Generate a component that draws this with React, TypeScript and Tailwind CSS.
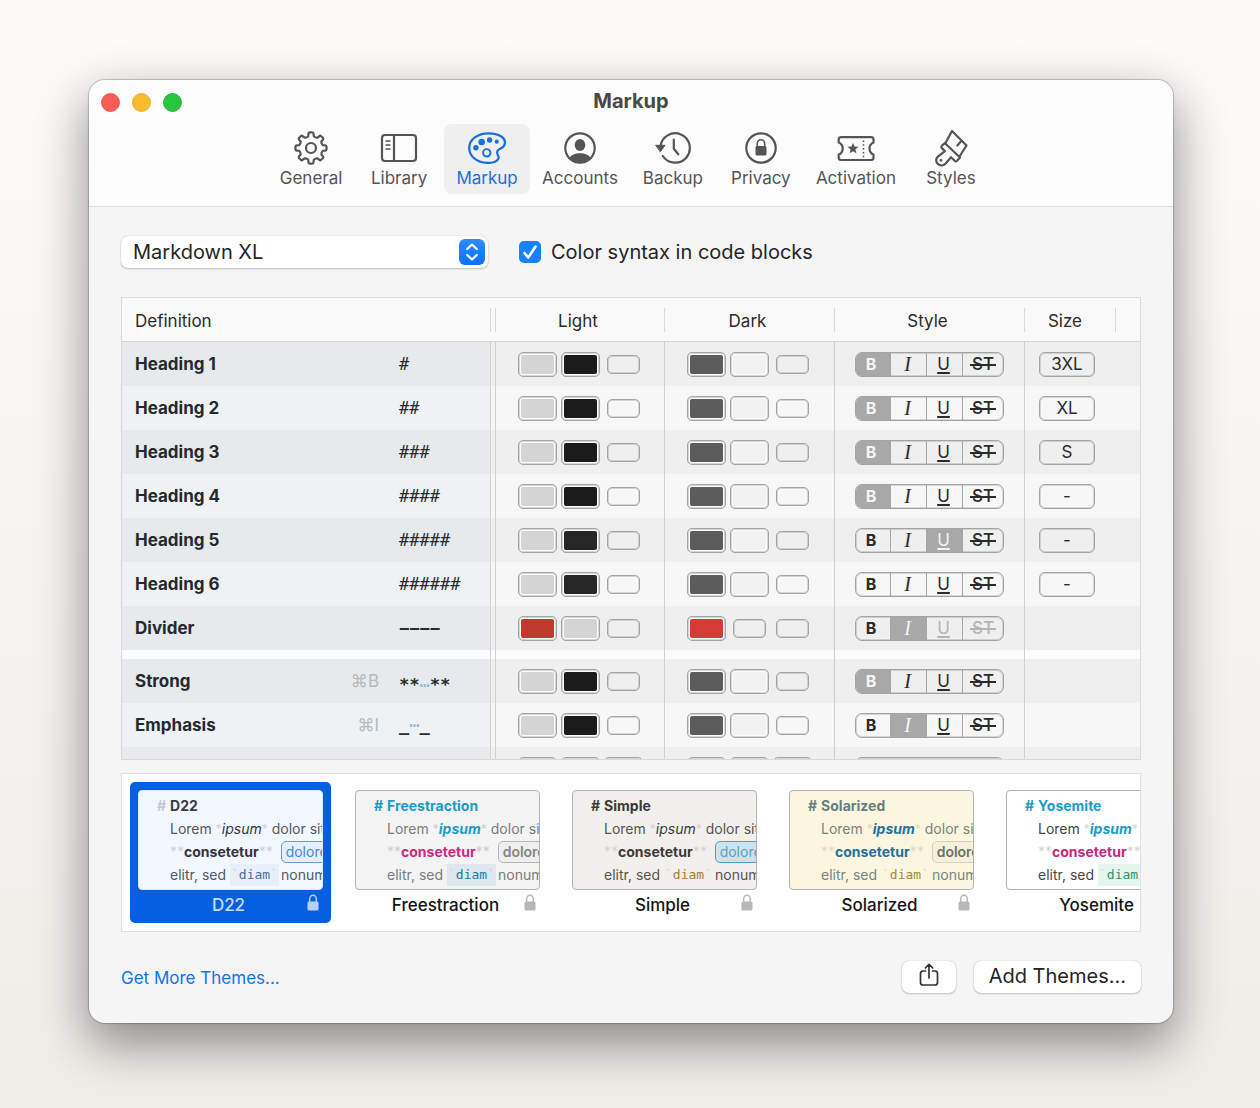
import React from "react";

type Weight = "B" | "I" | "U" | "S";

interface Row {
  name: string;
  mark: React.ReactNode;
  shortcut?: string;
  light: (string | null)[];
  dark: (string | null)[];
  on?: Weight;
  off?: Weight[];
  size?: string;
  groupStart?: boolean;
  shaded: boolean;
}

const LIGHT = ["bg-[#d4d4d4]", "bg-[#1b1b1b]", null];
const LIGHT_SOFT = ["bg-[#d4d4d4]", "bg-[#262626]", null];
const DARK = ["bg-[#5c5c5c]", "bg-[#f2f2f2]", null];

const Dots = ({ raised }: { raised?: boolean }) => (
  <span className={raised ? "relative bottom-1 text-[#8fb4de]" : "text-[#8fb4de]"}>…</span>
);

const ROWS: Row[] = [
  { name: "Heading 1", mark: "#", light: LIGHT, dark: DARK, on: "B", size: "3XL", shaded: true },
  { name: "Heading 2", mark: "##", light: LIGHT, dark: DARK, on: "B", size: "XL", shaded: false },
  { name: "Heading 3", mark: "###", light: LIGHT, dark: DARK, on: "B", size: "S", shaded: true },
  { name: "Heading 4", mark: "####", light: LIGHT, dark: DARK, on: "B", size: "-", shaded: false },
  { name: "Heading 5", mark: "#####", light: LIGHT_SOFT, dark: DARK, on: "U", size: "-", shaded: true },
  { name: "Heading 6", mark: "######", light: LIGHT_SOFT, dark: DARK, size: "-", shaded: false },
  {
    name: "Divider",
    mark: <b>−−−−</b>,
    light: ["bg-[#c03a30]", "bg-[#d4d4d4]", null],
    dark: ["bg-[#d63a34]", null, null],
    on: "I",
    off: ["U", "S"],
    shaded: true,
  },
  {
    name: "Strong",
    mark: <><b>∗∗</b><Dots /><b>∗∗</b></>,
    shortcut: "⌘B",
    light: LIGHT,
    dark: DARK,
    on: "B",
    groupStart: true,
    shaded: true,
  },
  {
    name: "Emphasis",
    mark: <><b>_</b><Dots raised /><b>_</b></>,
    shortcut: "⌘I",
    light: LIGHT,
    dark: DARK,
    on: "I",
    shaded: false,
  },
];

/* ---------- toolbar icons ---------- */

function gearPath(teeth: number, outer: number, inner: number) {
  const pt = (r: number, deg: number) => {
    const a = (deg * Math.PI) / 180;
    return `${(18 + r * Math.sin(a)).toFixed(2)} ${(18 - r * Math.cos(a)).toFixed(2)}`;
  };
  let d = "";
  for (let i = 0; i < teeth; i++) {
    const c = (i * 360) / teeth;
    d += `${i === 0 ? "M" : "L"}${pt(inner, c - 13)}`;
    d += `L${pt(outer - 1, c - 10)}Q${pt(outer, c - 9)} ${pt(outer, c - 5)}`;
    d += `L${pt(outer, c + 5)}Q${pt(outer, c + 9)} ${pt(outer - 1, c + 10)}`;
    d += `L${pt(inner, c + 13)}Q${pt(inner - 1.2, c + 22.5)} ${pt(inner, c + 32)}`;
  }
  return d + "Z";
}

const stroke = { fill: "none", stroke: "currentColor", strokeWidth: 2.2, strokeLinecap: "round", strokeLinejoin: "round" } as const;

const GearIcon = () => (
  <svg width="36" height="36" viewBox="0 0 36 36" {...stroke}>
    <path d={gearPath(8, 15.6, 12.2)} />
    <circle cx="18" cy="18" r="5" />
  </svg>
);

const SidebarIcon = () => (
  <svg width="38" height="30" viewBox="0 0 38 30" {...stroke}>
    <rect x="2" y="2" width="34" height="26" rx="3" />
    <path d="M14 2v26" />
    <path d="M6.2 8h3.6M6.2 12h3.6M6.2 16h3.6" strokeWidth="1.7" />
  </svg>
);

const PaletteIcon = () => (
  <svg width="38" height="32" viewBox="0 0 37 31" {...stroke}>
    <path d="M1.200 15.500C1.200 7 9.500 1.200 20 1.200c9.500 0 16 3.800 16 9 0 3.800-2.500 5.300-5.500 6.600-2.200 1-2.600 2.400-1.800 4.600.8 2 1.800 3.200.6 5C27.800 29 24 30 19.500 30 9 30 1.200 24 1.200 15.500Z" />
    <g fill="currentColor" stroke="none">
      <circle cx="7.700" cy="15.300" r="2.600" />
      <circle cx="13.300" cy="9.700" r="3.200" />
      <circle cx="21" cy="7.700" r="2.600" />
      <circle cx="28" cy="9.300" r="2" />
    </g>
    <circle cx="18.300" cy="20.200" r="3.600" strokeWidth="1.900" />
  </svg>
);

const AccountIcon = () => (
  <svg width="34" height="34" viewBox="0 0 34 34" {...stroke}>
    <circle cx="17" cy="17" r="14.700" />
    <ellipse cx="17" cy="14" rx="5.300" ry="6" fill="currentColor" stroke="none" />
    <path d="M6.500 27c1.500-3 5.500-4.700 10.500-4.700s9 1.700 10.500 4.700c-2.600 2.900-6.500 4.500-10.500 4.500S9.100 29.900 6.500 27Z" fill="currentColor" stroke="none" />
  </svg>
);

const BackupIcon = () => (
  <svg width="36" height="34" viewBox="0 0 36 34" {...stroke}>
    <path d="M5.500 15.500a14.700 14.700 0 1 1 2.300 9.500" />
    <path d="M1 14.300h9L5.500 20.500Z" fill="currentColor" strokeWidth="1" />
    <path d="M18.800 8.500v9.300l4.500 5.500" />
  </svg>
);

const PrivacyIcon = () => (
  <svg width="34" height="34" viewBox="0 0 34 34" {...stroke}>
    <circle cx="17" cy="17" r="14.700" />
    <rect x="11.500" y="15" width="11" height="9.500" rx="1.500" fill="currentColor" stroke="none" />
    <path d="M13.300 15.500v-2.800a3.700 4 0 0 1 7.400 0v2.800" strokeWidth="1.600" />
  </svg>
);

const TicketIcon = () => (
  <svg width="40" height="27" viewBox="-1 -1 39 27" {...stroke}>
    <path d="M3.700 1.200H33.500C35 1.200 36 2.200 36 3.700V6.500C33.500 7.500 32 9.500 32 12.500S33.500 17.500 36 18.500V21.500c0 1.500-1 2.500-2.500 2.500H3.700c-1.500 0-2.500-1-2.500-2.500V18.500C3.700 17.500 5.200 15.500 5.200 12.500S3.700 7.500 1.200 6.500V3.700c0-1.500 1-2.500 2.500-2.500Z" />
    <path d="M15.500 6.800l1.500 3.700 4 .3-3.100 2.600 1 3.900-3.400-2.100-3.400 2.100 1-3.900L10 10.800l4-.3Z" fill="currentColor" stroke="none" />
    <path d="M26 4.500v17" strokeWidth="1.500" strokeDasharray="1.500 2.300" strokeLinecap="butt" />
  </svg>
);

const BrushIcon = () => (
  <svg width="36" height="38" viewBox="-2 -1 36 38" {...stroke}>
    <path d="M10.500 13 17 1l14.500 14.500-7 11" />
    <path d="M26.500 10.800 22.300 15.500" />
    <path d="M10 13.200 25 27.500l-3 3.300c-.8.800-1.500.8-2.300 0L16 27.200l-5.300 6.300c-2 2.200-5.200 2.600-7.600.7-2.500-2.100-2.500-5.600-.2-7.600l7-5.500-3-3c-.8-.8-.8-1.600 0-2.400Z" />
    <circle cx="6" cy="30.300" r="1.400" fill="currentColor" stroke="none" />
  </svg>
);

const TABS = [
  { label: "General", Icon: GearIcon },
  { label: "Library", Icon: SidebarIcon },
  { label: "Markup", Icon: PaletteIcon, active: true },
  { label: "Accounts", Icon: AccountIcon },
  { label: "Backup", Icon: BackupIcon },
  { label: "Privacy", Icon: PrivacyIcon },
  { label: "Activation", Icon: TicketIcon },
  { label: "Styles", Icon: BrushIcon },
];

function Toolbar() {
  return (
    <header className="border-b border-[#dcdcdc] bg-[#fcfcfc] pb-3">
      <div className="grid h-11 grid-cols-[1fr_auto_1fr] items-center px-3">
        <div className="flex gap-3">
          <button aria-label="Close" className="size-[19px] rounded-full border border-[#ee5a54] bg-[#fb5d56]" />
          <button aria-label="Minimize" className="size-[19px] rounded-full border border-[#ecb032] bg-[#fbbb2e]" />
          <button aria-label="Zoom" className="size-[19px] rounded-full border border-[#24bb38] bg-[#29c53e]" />
        </div>
        <h1 className="pb-[2px] text-xl leading-6 font-bold text-[#484848]">Markup</h1>
      </div>
      <nav className="flex justify-center gap-[2px]">
        {TABS.map(({ label, Icon, active }) => (
          <button
            key={label}
            className={
              active
                ? "flex min-w-[86px] flex-col items-center rounded-lg bg-[#efefef] px-[10px] pt-1 pb-[6px] text-[#1a6fe0]"
                : "flex min-w-[86px] flex-col items-center rounded-lg px-[10px] pt-1 pb-[6px] text-[#555555]"
            }
          >
            <span className="flex h-10 items-center justify-center">
              <Icon />
            </span>
            <span className="text-[17px] leading-5">{label}</span>
          </button>
        ))}
      </nav>
    </header>
  );
}

/* ---------- table ---------- */

function Swatch({ color, label }: { color: string | null; label: string }) {
  return (
    <span className="flex w-[39px] justify-center">
      {color ? (
        <button
          aria-label={label}
          className="h-[25px] w-[39px] rounded-[5px] border border-[#a3a3a3] bg-[#fbfbfb] p-[2px] ring-1 ring-[#a3a3a3]/40 ring-inset"
        >
          <span className={`block h-full w-full rounded-[2px] ${color}`} />
        </button>
      ) : (
        <button aria-label={label} className="h-[19px] w-[33px] rounded-[5px] border border-[#a3a3a3] ring-1 ring-[#a3a3a3]/40 ring-inset" />
      )}
    </span>
  );
}

function Swatches({ colors, name }: { colors: (string | null)[]; name: string }) {
  return (
    <div className="flex items-center gap-1 pl-[22px]">
      {colors.map((c, i) => (
        <Swatch key={i} color={c} label={`${name} color ${i + 1}`} />
      ))}
    </div>
  );
}

const STYLE_NAMES: Record<Weight, string> = { B: "Bold", I: "Italic", U: "Underline", S: "Strikethrough" };

function StyleControl({ on, off = [] }: { on?: Weight; off?: Weight[] }) {
  const glyph: Record<Weight, React.ReactNode> = {
    B: <span className="text-base leading-none font-bold">B</span>,
    I: <span className="font-['Liberation_Serif',serif] text-xl leading-none italic">I</span>,
    U: <span className="underline decoration-2 underline-offset-2">U</span>,
    S: (
      <span className="relative px-[2px] font-medium after:absolute after:inset-x-0 after:top-1/2 after:h-[2px] after:bg-current">
        ST
      </span>
    ),
  };
  return (
    <div className="ml-5 flex h-[25px] w-[149px] divide-x divide-[#a6a6a6] overflow-hidden rounded-[7px] border border-[#a3a3a3] ring-1 ring-[#a3a3a3]/40 ring-inset">
      {(["B", "I", "U", "S"] as Weight[]).map((k) => {
        const tone = k === on ? "bg-[#a8a8a8] text-[#f4f4f4]" : off.includes(k) ? "text-[#b4b4b4]" : "text-[#2a2a2a]";
        return (
          <button
            key={k}
            aria-label={STYLE_NAMES[k]}
            aria-pressed={k === on}
            className={`flex items-center justify-center text-[17px] leading-none ${k === "S" ? "flex-1" : k === "B" ? "w-[35px] pr-1" : "w-9 pr-[2px]"} ${tone}`}
          >
            {glyph[k]}
          </button>
        );
      })}
    </div>
  );
}

function HeadCell({ children, line = true, className = "" }: { children?: React.ReactNode; line?: boolean; className?: string }) {
  return (
    <th className="h-11 border-b border-[#d6d6d6] bg-[#f9f9f9] p-0 font-normal">
      <div className={`flex h-6 items-end justify-center leading-[22px] ${line ? "border-l border-[#d9d9d9]" : ""} ${className}`}>{children}</div>
    </th>
  );
}

const PEEK = ["bg-[#d4d4d4]", "bg-[#1b1b1b]", "bg-[#f2f2f2]"];

function MarkupTable() {
  return (
    <div className="mt-7 h-[463px] overflow-hidden border border-[#d9d9d9] text-[17px] text-[#2b2b2b]">
      <table className="w-full table-fixed border-separate border-spacing-0">
        <colgroup>
          <col />
          <col className="w-1" />
          <col className="w-[169px]" />
          <col className="w-[170px]" />
          <col className="w-[190px]" />
          <col className="w-[91px]" />
          <col className="w-[25px]" />
        </colgroup>
        <thead>
          <tr>
            <th className="h-11 border-b border-[#d6d6d6] bg-[#f9f9f9] p-0 font-normal">
              <div className="flex h-6 items-end border-r border-[#d9d9d9] pl-[13px] leading-[22px]">Definition</div>
            </th>
            <HeadCell line={false} />
            <HeadCell className="pr-1">Light</HeadCell>
            <HeadCell className="pr-1">Dark</HeadCell>
            <HeadCell className="pr-1">Style</HeadCell>
            <HeadCell className="pr-[10px]">Size</HeadCell>
            <HeadCell />
          </tr>
        </thead>
        <tbody>
          {ROWS.map((r) => {
            const bg = r.shaded ? "bg-[#efefef]" : "bg-[#f7f7f7]";
            const cell = `h-11 border-l border-[#cfcfcf] p-0 ${bg}`;
            return (
              <React.Fragment key={r.name}>
                {r.groupStart && (
                  <tr>
                    <td className="h-[9px] border-r border-[#cfcfcf] bg-[#fafdfe] p-0" />
                    <td className="bg-[#fdfdfd] p-0" />
                    <td className="border-l border-[#cfcfcf] bg-[#fbfbfb] p-0" />
                    <td className="border-l border-[#cfcfcf] bg-[#fbfbfb] p-0" />
                    <td className="border-l border-[#cfcfcf] bg-[#fbfbfb] p-0" />
                    <td colSpan={2} className="border-l border-[#cfcfcf] bg-[#fdfdfd] p-0" />
                  </tr>
                )}
                <tr>
                  <td className={`h-11 border-r border-[#cfcfcf] p-0 pl-[13px] ${r.shaded ? "bg-[#e6eaed]" : "bg-[#eef2f5]"}`}>
                    <div className="flex items-center pt-[2px]">
                      <span className="flex-1 font-bold text-[#24292d]">{r.name}</span>
                      {r.shortcut && <span className="text-[#b5b9bc]">{r.shortcut}</span>}
                      <span className="ml-5 w-[91px] font-['DejaVu_Sans_Mono',monospace] whitespace-nowrap">{r.mark}</span>
                    </div>
                  </td>
                  <td className={`p-0 ${bg}`} />
                  <td className={cell}>
                    <Swatches colors={r.light} name={`${r.name} light`} />
                  </td>
                  <td className={cell}>
                    <Swatches colors={r.dark} name={`${r.name} dark`} />
                  </td>
                  <td className={cell}>
                    <StyleControl on={r.on} off={r.off} />
                  </td>
                  <td colSpan={2} className={cell}>
                    {r.size && (
                      <button className="ml-[14px] flex h-[25px] w-14 items-center justify-center rounded-[6px] border border-[#a3a3a3] leading-none ring-1 ring-[#a3a3a3]/40 ring-inset">
                        {r.size}
                      </button>
                    )}
                  </td>
                </tr>
              </React.Fragment>
            );
          })}
          {/* first row below the scroll edge */}
          <tr aria-hidden="true">
            <td className="h-11 border-r border-[#cfcfcf] bg-[#e8eaed] p-0" />
            <td className="bg-[#efefef] p-0" />
            <td className="border-l border-[#cfcfcf] bg-[#efefef] p-0">
              <Swatches colors={PEEK} name="Next light" />
            </td>
            <td className="border-l border-[#cfcfcf] bg-[#efefef] p-0">
              <Swatches colors={PEEK} name="Next dark" />
            </td>
            <td className="border-l border-[#cfcfcf] bg-[#efefef] p-0">
              <div className="ml-5 h-[25px] w-[149px] rounded-[7px] border border-[#a3a3a3] ring-1 ring-[#a3a3a3]/40 ring-inset" />
            </td>
            <td colSpan={2} className="border-l border-[#cfcfcf] bg-[#efefef] p-0" />
          </tr>
        </tbody>
      </table>
    </div>
  );
}

/* ---------- themes ---------- */

interface Theme {
  name: string;
  paper: string;
  hash: string;
  title: string;
  text: string;
  em: string;
  strong: string;
  link: string;
  code: string;
  faint: string;
  selected?: boolean;
}

const THEMES: Theme[] = [
  {
    name: "D22",
    paper: "bg-[#f3f7ff] border-[#dbe6fa]",
    hash: "text-[#c5c8cd]",
    title: "text-[#3a3d42]",
    text: "text-[#55595f]",
    em: "italic text-[#33363b]",
    strong: "text-[#33363b]",
    link: "border-[#6d9ad8] bg-[#e4effd] text-[#4f85cd]",
    code: "bg-[#e9eff8] text-[#4c6ca3]",
    faint: "text-[#cdd2da]",
    selected: true,
  },
  {
    name: "Freestraction",
    paper: "bg-[#f4f4f4] border-[#b3b3b3]",
    hash: "text-[#1b9bc6]",
    title: "text-[#1b9bc6]",
    text: "text-[#7b7b7b]",
    em: "font-bold italic text-[#1b9bc6]",
    strong: "text-[#cb2a80]",
    link: "border-[#b5b5b5] bg-[#efefef] font-semibold text-[#858585]",
    code: "bg-[#dde7ec] text-[#1f78a8]",
    faint: "text-[#cfcfcf]",
  },
  {
    name: "Simple",
    paper: "bg-[#f2f0ed] border-[#b3b3b3]",
    hash: "text-[#3c3936]",
    title: "text-[#3c3936]",
    text: "text-[#57534f]",
    em: "italic text-[#3c3936]",
    strong: "text-[#3c3936]",
    link: "border-[#4f9fca] bg-[#cfe2ec] text-[#5a9fc6]",
    code: "text-[#a87a35]",
    faint: "text-[#d6d3cf]",
  },
  {
    name: "Solarized",
    paper: "bg-[#fcf6e0] border-[#b3b3b3]",
    hash: "text-[#64807f]",
    title: "text-[#64807f]",
    text: "text-[#76857f]",
    em: "font-bold italic text-[#23719b]",
    strong: "text-[#23719b]",
    link: "border-[#d5d1bd] bg-[#f5f0db] font-semibold text-[#6d7268]",
    code: "text-[#a58b3a]",
    faint: "text-[#dedac8]",
  },
  {
    name: "Yosemite",
    paper: "bg-white border-[#b3b3b3]",
    hash: "text-[#1b9bc6]",
    title: "text-[#1b9bc6]",
    text: "text-[#454545]",
    em: "font-bold italic text-[#1b9bc6]",
    strong: "text-[#c5287f]",
    link: "border-[#b5b5b5] bg-[#efefef] text-[#858585]",
    code: "bg-[#e6f5ee] text-[#23996a]",
    faint: "text-[#d5d5d5]",
  },
];

const LockGlyph = () => (
  <svg width="12" height="17" viewBox="0 0 12 17" fill="none" stroke="currentColor" strokeWidth="1.500">
    <path d="M2.700 8V4.800a3.300 3.600 0 0 1 6.600 0V8" />
    <rect x="0.500" y="7.500" width="11" height="9" rx="1.500" fill="currentColor" stroke="none" />
  </svg>
);

function ThemeCard({ t }: { t: Theme }) {
  return (
    <button
      aria-pressed={!!t.selected}
      className={`flex w-[201px] shrink-0 flex-col rounded-[5px] p-2 ${t.selected ? "bg-[#0560e0]" : ""}`}
    >
      <span className={`block h-[100px] w-full overflow-hidden rounded-[4px] border pt-[3px] text-left text-sm leading-[23px] whitespace-nowrap ${t.paper} ${t.text}`}>
        <span className="flex gap-1 pl-[18px] font-bold">
          <span className={t.hash}>#</span>
          <span className={t.title}>{t.name}</span>
        </span>
        <span className="flex pl-[31px]">
          Lorem<span className={`ml-1 text-xs leading-[23px] ${t.faint}`}>*</span>
          <span className={t.em}>ipsum</span>
          <span className={`mr-1 text-xs leading-[23px] ${t.faint}`}>*</span>dolor sit
        </span>
        <span className="flex h-[23px] items-center pl-[31px]">
          <span className={t.faint}>**</span>
          <span className={`font-bold ${t.strong}`}>consetetur</span>
          <span className={t.faint}>**</span>
          <span className={`ml-2 rounded-[5px] border px-1 leading-5 ${t.link}`}>dolore</span>
        </span>
        <span className="flex h-[23px] items-center pl-[31px]">
          elitr, sed
          <span className={`mr-[2px] ml-1 px-[1px] font-['DejaVu_Sans_Mono',monospace] text-[13px] leading-[22px] ${t.code}`}>
            <span className={t.faint}>`</span>diam<span className={t.faint}>`</span>
          </span>
          nonumy
        </span>
      </span>
      <span
        className={`grid h-[25px] w-full grid-cols-[1fr_auto_1fr] items-center pt-1 pr-1 text-[17px] leading-5 font-medium ${
          t.selected ? "text-[#c6dcfb]" : "text-[#151515]"
        }`}
      >
        <span />
        <span>{t.name}</span>
        <span className={`justify-self-end pb-1 ${t.selected ? "text-[#b5cff6]" : "text-[#b8b8b8]"}`}>
          <LockGlyph />
        </span>
      </span>
    </button>
  );
}

export default function App() {
  return (
    <main className="min-h-screen bg-linear-to-b from-[#fcfbf9] to-[#f0ede9] pt-20 pr-[87px] pb-[84px] pl-[89px] font-['Inter',sans-serif]">
      <div className="overflow-hidden rounded-2xl bg-[#f5f5f5] shadow-[0_0_1px_1px_rgba(0,0,0,0.2),0_20px_50px_2px_rgba(0,0,0,0.42)]">
        <Toolbar />
        <div className="px-8 pt-[29px] pb-[30px]">
          <div className="flex items-center">
            <div className="relative w-[367px]">
              <select
                aria-label="Markup definition"
                className="h-8 w-full appearance-none rounded-[7px] bg-white pr-10 pl-3 text-xl text-[#242424] shadow-[0_0_1px_rgba(0,0,0,0.3),0_1px_2px_rgba(0,0,0,0.2)]"
              >
                <option>Markdown XL</option>
              </select>
              <span className="pointer-events-none absolute top-[3px] right-[3px] flex size-[26px] items-center justify-center rounded-[6px] bg-linear-to-b from-[#2a8dff] to-[#0a70f5]">
                <svg width="12" height="18" viewBox="0 0 12 18" fill="none" stroke="white" strokeWidth="2.200" strokeLinecap="round" strokeLinejoin="round">
                  <path d="M1.200 6 6 1.500 10.800 6M1.200 12 6 16.500l4.800-4.500" />
                </svg>
              </span>
            </div>
            <label className="ml-[31px] flex items-center gap-[10px] text-xl leading-7 text-[#242424]">
              <span className="relative flex size-[22px]">
                <input
                  type="checkbox"
                  defaultChecked
                  className="peer size-[22px] appearance-none rounded-[5px] border border-[#bbb] bg-white checked:border-0 checked:bg-[#1681fb]"
                />
                <svg className="pointer-events-none absolute inset-0 hidden peer-checked:block" width="22" height="22" viewBox="0 0 22 22" fill="none" stroke="white" strokeWidth="2.600" strokeLinecap="round" strokeLinejoin="round">
                  <path d="m5.500 12 3.700 4.500L16.500 5.500" />
                </svg>
              </span>
              Color syntax in code blocks
            </label>
          </div>

          <div className="pt-px">
            <MarkupTable />
          </div>

          <div className="mt-[13px] flex gap-4 overflow-hidden border border-[#e0e0e0] bg-white p-2">
            {THEMES.map((t) => (
              <ThemeCard key={t.name} t={t} />
            ))}
          </div>

          <footer className="mt-[29px] flex items-center gap-[18px]">
            <a href="#themes" className="mr-auto pt-1 text-[17px] text-[#1273ea]">
              Get More Themes...
            </a>
            <button aria-label="Share" className="flex h-8 w-[54px] items-center justify-center rounded-[7px] bg-white shadow-[0_0_1px_rgba(0,0,0,0.3),0_1px_2px_rgba(0,0,0,0.2)]">
              <svg width="20" height="24" viewBox="0 0 20 24" fill="none" stroke="#333" strokeWidth="1.700" strokeLinecap="round" strokeLinejoin="round" className="mb-1">
                <path d="M6.500 8H4a2.500 2.500 0 0 0-2.500 2.500v9A2.500 2.500 0 0 0 4 22h12a2.500 2.500 0 0 0 2.500-2.500v-9A2.500 2.500 0 0 0 16 8h-2.500M10 15V1.500M6.300 5 10 1.300 13.700 5" />
              </svg>
            </button>
            <button className="h-8 rounded-[7px] bg-white px-[15px] pb-[2px] text-xl leading-7 text-[#242424] shadow-[0_0_1px_rgba(0,0,0,0.3),0_1px_2px_rgba(0,0,0,0.2)]">
              Add Themes...
            </button>
          </footer>
        </div>
      </div>
    </main>
  );
}
